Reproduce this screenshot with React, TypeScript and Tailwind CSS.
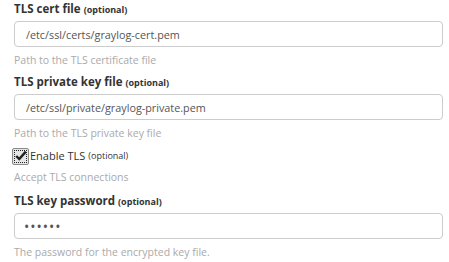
const font = { fontFamily: '"Open Sans", "Liberation Sans", sans-serif' };

type FieldProps = {
    label: string;
    value: string;
    help: string;
    password?: boolean;
};

const Field = ({ label, value, help, password }: FieldProps) => (
    <div className="flex flex-col">
        <label className="h-[18px] leading-[18px] text-[11.5px] font-bold text-[#333]">
            {label} <span className="text-[9px]">(optional)</span>
        </label>
        <input
            type={password ? "password" : "text"}
            readOnly
            value={value}
            style={font}
            className={
                "mt-[3px] h-[26px] w-[429px] rounded-[4px] border border-[#cccccc] bg-white text-[#555] outline-none " +
                (password ? "pl-[9px] text-[14px] tracking-[1px]" : "px-[11px] text-[10.8px]")
            }
        />
        <p className="mt-[5px] h-[16px] leading-[16px] text-[10.5px] text-[#aaaaaa]">{help}</p>
    </div>
);

export default function App() {
    return (
        <div style={font} className="w-[449px] h-[262px] bg-white pl-[14px] flex flex-col gap-[5px]">
            <Field
                label="TLS cert file"
                value="/etc/ssl/certs/graylog-cert.pem"
                help="Path to the TLS certificate file"
            />
            <Field
                label="TLS private key file"
                value="/etc/ssl/private/graylog-private.pem"
                help="Path to the TLS private key file"
            />
            <div className="flex flex-col mb-[2px]">
                <label className="ml-[-2px] h-[20px] flex items-center text-[11px] text-[#333]">
                    <span className="relative mr-[1px] flex h-[17px] w-[17px] items-center justify-center rounded-[2px] border border-[#8a8a8a] bg-[#e6e6e6]">
                        <span className="absolute inset-[1px] border border-dotted border-[#222]" />
                        <svg viewBox="0 0 16 16" className="h-[14px] w-[14px]">
                            <path d="M2.5 8 L6 11.5 L13.5 3" fill="none" stroke="#222" strokeWidth="2.8" />
                        </svg>
                    </span>
                    Enable TLS <span className="ml-[3px] text-[9px]">(optional)</span>
                </label>
                <p className="mt-[3px] h-[16px] leading-[16px] text-[10.5px] text-[#aaaaaa]">Accept TLS connections</p>
            </div>
            <Field
                label="TLS key password"
                value="secret"
                password
                help="The password for the encrypted key file."
            />
        </div>
    );
}
